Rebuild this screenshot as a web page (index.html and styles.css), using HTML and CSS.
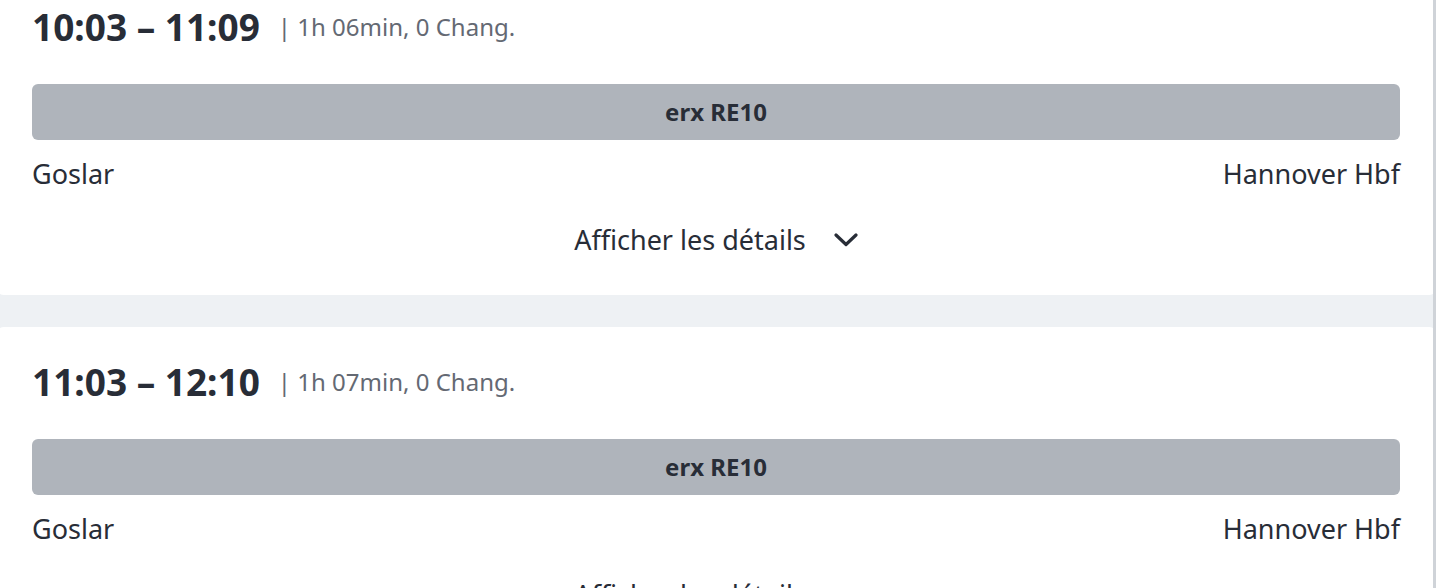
FILE: index.html
```html
<!DOCTYPE html>
<html lang="fr">
<head>
    <meta charset="UTF-8">
    <meta name="viewport" content="width=device-width, initial-scale=1.0">
    <title>Connexions</title>
    <link rel="stylesheet" href="styles.css">
</head>
<body>

    <div class="page">
        <div class="results">

            <div class="journey first">
                <div class="journey-head">
                    <span class="times">10:03 &ndash; 11:09</span>
                    <span class="meta">| 1h 06min, 0 Chang.</span>
                </div>
                <div class="train-bar">erx RE10</div>
                <div class="stations">
                    <span>Goslar</span>
                    <span>Hannover Hbf</span>
                </div>
                <button class="details-toggle" type="button">
                    Afficher les détails
                    <svg width="24" height="14" viewBox="0 0 24 14"><polyline points="2,2 12,11.5 22,2" fill="none" stroke="currentColor" stroke-width="3.2" stroke-linecap="round" stroke-linejoin="round"/></svg>
                </button>
            </div>

            <div class="journey">
                <div class="journey-head">
                    <span class="times">11:03 &ndash; 12:10</span>
                    <span class="meta">| 1h 07min, 0 Chang.</span>
                </div>
                <div class="train-bar">erx RE10</div>
                <div class="stations">
                    <span>Goslar</span>
                    <span>Hannover Hbf</span>
                </div>
                <button class="details-toggle" type="button">
                    Afficher les détails
                    <svg width="24" height="14" viewBox="0 0 24 14"><polyline points="2,2 12,11.5 22,2" fill="none" stroke="currentColor" stroke-width="3.2" stroke-linecap="round" stroke-linejoin="round"/></svg>
                </button>
            </div>

        </div>
        <div class="scrollbar"></div>
    </div>

</body>
</html>
```

FILE: styles.css
```css
html, body {
    margin: 0;
    height: 100%;
    overflow: hidden;
}
body {
    font-family: "Noto Sans", "Open Sans", sans-serif;
    background-color: #eef1f4;
    color: #282d37;
}
.page {
    display: flex;
    height: 588px;
}
.results {
    flex: 1;
    overflow: hidden;
}
.scrollbar {
    width: 3px;
    background-color: #cfd3d8;
}
.journey {
    background-color: white;
    border-radius: 8px;
    margin: 0 -4px 32px -4px;
    padding: 35px 37px 39px 36px;
}
.journey.first {
    margin-top: -28px;
}
.journey-head {
    display: flex;
    align-items: center;
    gap: 18px;
    height: 40px;
    line-height: 40px;
}
.times {
    font-size: 37px;
    font-weight: 700;
    color: #282d37;
}
.meta {
    font-size: 24px;
    color: #646973;
}
.train-bar {
    margin-top: 37px;
    height: 56px;
    line-height: 56px;
    background-color: #afb4bb;
    border-radius: 6px;
    text-align: center;
    font-size: 24px;
    font-weight: 700;
    color: #282d37;
}
.stations {
    display: flex;
    justify-content: space-between;
    margin-top: 18px;
    font-size: 27px;
    line-height: 32px;
}
.details-toggle {
    display: flex;
    align-items: center;
    justify-content: center;
    gap: 28px;
    width: 100%;
    margin-top: 34px;
    padding: 0;
    border: none;
    background: none;
    font-family: inherit;
    font-size: 27px;
    line-height: 32px;
    color: #282d37;
    cursor: pointer;
}
```
